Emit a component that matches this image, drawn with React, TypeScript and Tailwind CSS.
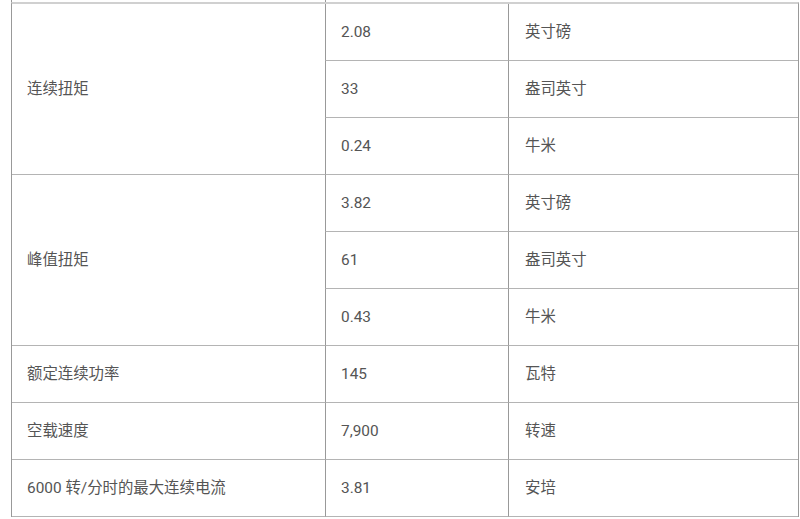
import React from 'react';

type Unit = { value: string; unit: string };

const torqueGroups: { label: string; rows: Unit[] }[] = [
  {
    label: '连续扭矩',
    rows: [
      { value: '2.08', unit: '英寸磅' },
      { value: '33', unit: '盎司英寸' },
      { value: '0.24', unit: '牛米' },
    ],
  },
  {
    label: '峰值扭矩',
    rows: [
      { value: '3.82', unit: '英寸磅' },
      { value: '61', unit: '盎司英寸' },
      { value: '0.43', unit: '牛米' },
    ],
  },
];

const singleRows = [
  { label: '额定连续功率', value: '145', unit: '瓦特' },
  { label: '空载速度', value: '7,900', unit: '转速' },
  { label: '6000 转/分时的最大连续电流', value: '3.81', unit: '安培' },
];

// one cell of the spec table, text centred vertically
function Cell({ children, className = '' }: { children: React.ReactNode; className?: string }) {
  return (
    <div className={`flex items-center h-[57px] pt-[2px] border-b border-b-[#b4b4b4] ${className}`}>
      {children}
    </div>
  );
}

export default function App() {
  return (
    <div
      className="w-[800px] h-[519px] overflow-hidden bg-white text-[15.4px] text-[#555]"
      style={{ fontFamily: 'Roboto, "Noto Sans CJK SC", sans-serif' }}
    >
      {/* tail of the row above, cut off by the viewport */}
      <div className="flex h-[2px] ml-[11px]">
        <div className="w-[314px] border-l border-l-[#999]" />
        <div className="w-[183px] border-l border-l-[#999]" />
      </div>

      <div className="ml-[11px] w-[788px] border-t-2 border-t-[#d0d0d0] border-l border-r border-l-[#999] border-r-[#999]">
        {torqueGroups.map((group) => (
          <div key={group.label} className="flex">
            <div className="w-[313px] flex items-center pl-[15px] pt-[2px] border-b border-b-[#b4b4b4]">
              {group.label}
            </div>
            <div className="flex flex-col">
              {group.rows.map((row) => (
                <div key={row.unit} className="flex">
                  <Cell className="w-[183px] pl-[15px] border-l border-l-[#999]">{row.value}</Cell>
                  <Cell className="w-[290px] pl-[16px] border-l border-l-[#999]">{row.unit}</Cell>
                </div>
              ))}
            </div>
          </div>
        ))}

        {singleRows.map((row) => (
          <div key={row.label} className="flex">
            <Cell className="w-[313px] pl-[15px]">{row.label}</Cell>
            <Cell className="w-[183px] pl-[15px] border-l border-l-[#999]">{row.value}</Cell>
            <Cell className="w-[290px] pl-[16px] border-l border-l-[#999]">{row.unit}</Cell>
          </div>
        ))}
      </div>
    </div>
  );
}
